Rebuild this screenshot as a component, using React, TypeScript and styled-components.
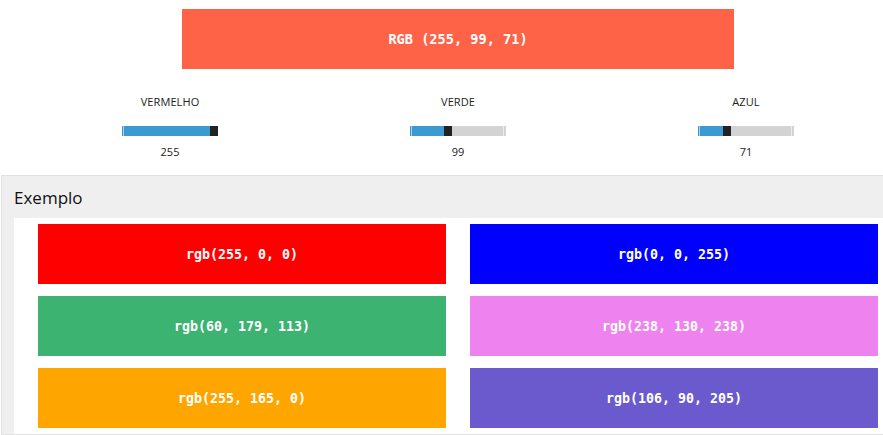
import React from "react";
import styled, { createGlobalStyle } from "styled-components";

const GlobalStyle = createGlobalStyle`
  html, body {
    margin: 0;
    padding: 0;
    background: #fff;
    overflow: hidden;
  }
  body {
    font-family: "Open Sans", "Noto Sans", sans-serif;
    color: #222;
  }
`;

interface Channel {
  label: string;
  value: number;
}

const channels: Channel[] = [
  { label: "VERMELHO", value: 255 },
  { label: "VERDE", value: 99 },
  { label: "AZUL", value: 71 },
];

const samples = [
  { r: 255, g: 0, b: 0 },
  { r: 0, g: 0, b: 255 },
  { r: 60, g: 179, b: 113 },
  { r: 238, g: 130, b: 238 },
  { r: 255, g: 165, b: 0 },
  { r: 106, g: 90, b: 205 },
];

const TRACK = 96;
const THUMB = 8;

const Slider = ({ value }: { value: number }) => {
  const pos = Math.round((value / 255) * (TRACK - THUMB));
  return (
    <Track>
      <Fill style={{ width: pos }} />
      <Thumb />
      <Rest />
    </Track>
  );
};

export default function App() {
  const color = { r: 255, g: 99, b: 71 };
  return (
    <Page>
      <GlobalStyle />
      <Top>
        <Preview $bg={`rgb(${color.r}, ${color.g}, ${color.b})`}>
          RGB ({color.r}, {color.g}, {color.b})
        </Preview>
        <Controls>
          {channels.map((c) => (
            <Control key={c.label}>
              <Label>{c.label}</Label>
              <Slider value={c.value} />
              <Value>{c.value}</Value>
            </Control>
          ))}
        </Controls>
      </Top>
      <Panel>
        <PanelTitle>Exemplo</PanelTitle>
        <PanelBody>
          <SwatchGrid>
            {samples.map((s) => {
              const rgb = `rgb(${s.r}, ${s.g}, ${s.b})`;
              return (
                <Swatch key={rgb} $bg={rgb}>
                  {rgb}
                </Swatch>
              );
            })}
          </SwatchGrid>
        </PanelBody>
      </Panel>
    </Page>
  );
}

const Page = styled.div`
  width: 916px;
`;

const Top = styled.div`
  display: flex;
  flex-direction: column;
  align-items: center;
  padding-top: 9px;
`;

const Preview = styled.div<{ $bg: string }>`
  width: 552px;
  height: 60px;
  background: ${(p) => p.$bg};
  color: #fff;
  font-family: "DejaVu Sans Mono", "Liberation Mono", monospace;
  font-weight: bold;
  font-size: 13.6px;
  display: flex;
  align-items: center;
  justify-content: center;
`;

const Controls = styled.div`
  display: grid;
  grid-template-columns: repeat(3, 288px);
  margin-top: 26px;
`;

const Control = styled.div`
  display: flex;
  flex-direction: column;
  align-items: center;
`;

const Label = styled.div`
  font-size: 11px;
  line-height: 14px;
  letter-spacing: 0.1px;
`;

const Track = styled.div`
  display: flex;
  width: ${TRACK}px;
  height: 10px;
  margin-top: 17px;
`;

const Fill = styled.div`
  height: 100%;
  background: #3b9bd0;
  box-shadow: inset 1px 0 0 #3b9bd0, inset 2px 0 0 #a9d3ec;
`;

const Thumb = styled.div`
  width: ${THUMB}px;
  height: 100%;
  background: #222;
`;

const Rest = styled.div`
  flex: 1;
  height: 100%;
  background: #d3d3d3;
  box-shadow: inset -2px 0 0 #d3d3d3, inset -3px 0 0 #ececec;
`;

const Value = styled.div`
  font-size: 11px;
  line-height: 14px;
  margin-top: 9px;
`;

const Panel = styled.div`
  margin-top: 16px;
  margin-left: 1px;
  width: 900px;
  background: #efefef;
  border: 1px solid #e2e2e2;
  padding: 0 12px;
`;

const PanelTitle = styled.div`
  height: 42px;
  display: flex;
  align-items: center;
  font-size: 17px;
  color: #111;
`;

const PanelBody = styled.div`
  background: #fff;
  padding: 6px 24px 6px;
`;

const SwatchGrid = styled.div`
  display: grid;
  grid-template-columns: repeat(2, 408px);
  grid-auto-rows: 60px;
  column-gap: 24px;
  row-gap: 12px;
`;

const Swatch = styled.div<{ $bg: string }>`
  background: ${(p) => p.$bg};
  color: #fff;
  font-family: "DejaVu Sans Mono", "Liberation Mono", monospace;
  font-weight: bold;
  font-size: 13.3px;
  display: flex;
  align-items: center;
  justify-content: center;
`;
